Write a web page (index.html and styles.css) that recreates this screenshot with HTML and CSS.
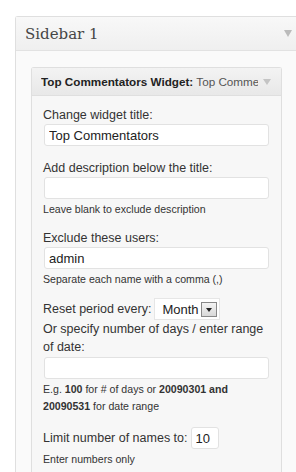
FILE: index.html
```html
<!DOCTYPE html>
<html>
  <head>
    <meta charset="utf-8" />
    <title>Widgets</title>
    <link rel="stylesheet" href="styles.css">
  </head>
  <body>
    <div class="sidebar">
      <div class="sidebar-name">
        <h3>Sidebar 1</h3>
        <span class="arrow"></span>
      </div>
      <div class="sidebar-body">
        <div class="widget">
          <div class="widget-top">
            <h4><strong>Top Commentators Widget:</strong> <span class="in-title">Top Commentators</span></h4>
            <span class="arrow small"></span>
          </div>
          <div class="widget-inside">
            <p class="field">
              <label>Change widget title:</label>
              <input type="text" class="wide" value="Top Commentators" />
            </p>
            <p class="field">
              <label>Add description below the title:</label>
              <input type="text" class="wide" value="" />
              <small>Leave blank to exclude description</small>
            </p>
            <p class="field tight">
              <label>Exclude these users:</label>
              <input type="text" class="wide" value="admin" />
              <small>Separate each name with a comma (,)</small>
            </p>
            <p class="field tight">
              <span class="inline">
                <label>Reset period every:</label>
                <span class="select">Month <span class="select-btn"></span></span>
              </span>
              <label class="two-line">Or specify number of days / enter range of date:</label>
              <input type="text" class="wide" value="" />
              <small class="tall">E.g. <b>100</b> for # of days or <b>20090301 and 20090531</b> for date range</small>
            </p>
            <p class="field">
              <span class="inline">
                <label>Limit number of names to:</label>
                <input type="text" class="short" value="10" />
              </span>
              <small>Enter numbers only</small>
            </p>
          </div>
        </div>
      </div>
    </div>
  </body>
</html>
```

FILE: styles.css
```css
* {
  box-sizing: border-box;
}
html,
body {
  margin: 0;
  padding: 0;
  background: #fff;
}
body {
  padding: 16px 0 0 15px;
  height: 472px;
  overflow: hidden;
  font-family: "Liberation Sans", Arial, sans-serif;
  color: #333;
}
.sidebar {
  width: 300px;
  border: 1px solid #dfdfdf;
  border-right: none;
  border-radius: 3px 0 0 0;
  background: #fafafa;
}
.sidebar-name {
  height: 34px;
  display: flex;
  align-items: center;
  justify-content: space-between;
  padding: 0 10px 0 9px;
  background: linear-gradient(#f8f8f8, #efefef);
  border-bottom: 1px solid #e2e2e2;
}
.sidebar-name h3 {
  margin: 0;
  font-family: Georgia, "DejaVu Serif", "Liberation Serif", serif;
  font-weight: normal;
  font-size: 15px;
  color: #464646;
}
.arrow {
  width: 0;
  height: 0;
  border-left: 4px solid transparent;
  border-right: 4px solid transparent;
  border-top: 7px solid #bbb;
  margin-right: 13px;
}
.arrow.small {
  border-top: 6px solid #c4c4c4;
  margin-right: 10px;
}
.sidebar-body {
  padding: 16px 0 0 15px;
}
.widget {
  width: 251px;
  border: 1px solid #dfdfdf;
  border-bottom: none;
  border-radius: 3px 3px 0 0;
  background: #f7f7f7;
}
.widget-top {
  height: 28px;
  display: flex;
  align-items: center;
  justify-content: space-between;
  padding-left: 9px;
  background: linear-gradient(#f3f3f3, #e8e8e8);
  border-bottom: 1px solid #dfdfdf;
}
.widget-top h4 {
  margin: 0;
  width: 217px;
  white-space: nowrap;
  overflow: hidden;
  font-size: 11.7px;
  font-weight: normal;
  color: #555;
}
.widget-top h4 strong {
  color: #222;
}
.widget-inside {
  padding: 11px 11px 20px 11px;
}
.field {
  margin: 0 0 14px 0;
  font-size: 12.5px;
}
.field.tight {
  margin-bottom: 12px;
}
.field label {
  display: block;
  line-height: 16px;
  margin-bottom: 1px;
}
.field label.two-line {
  line-height: 18px;
}
.field small {
  display: block;
  margin-top: 4px;
  font-size: 10.6px;
  line-height: 13px;
  color: #333;
}
.field small.tall {
  line-height: 17px;
  margin-top: 2px;
}
.wide {
  display: block;
  width: 225px;
  height: 22px;
  margin: 0 0 0 1px;
  padding: 0 4px;
  border: 1px solid #e2e2e2;
  border-radius: 3px;
  background: #fff;
  font-family: "Liberation Sans", Arial, sans-serif;
  font-size: 13px;
  color: #222;
  outline: none;
}
.inline {
  display: flex;
  align-items: center;
  height: 22px;
}
.inline label {
  display: inline;
  margin: 0 3px 0 0;
}
.select {
  display: inline-flex;
  align-items: center;
  justify-content: space-between;
  width: 66px;
  height: 22px;
  padding: 0 2px 0 7px;
  background: #fff;
  border: 1px solid #e6e6e6;
  font-size: 13px;
  color: #222;
}
.select-btn {
  width: 16px;
  height: 15px;
  border: 1px solid #888;
  background: linear-gradient(#f4f4f4, #d8d8d8);
  position: relative;
}
.select-btn::after {
  content: "";
  position: absolute;
  left: 4px;
  top: 5px;
  border-left: 3px solid transparent;
  border-right: 3px solid transparent;
  border-top: 4px solid #222;
}
.short {
  width: 28px;
  height: 22px;
  margin: 0;
  padding: 0 4px;
  border: 1px solid #e2e2e2;
  border-radius: 3px;
  background: #fff;
  font-family: "Liberation Sans", Arial, sans-serif;
  font-size: 13px;
  color: #222;
  outline: none;
}
```
